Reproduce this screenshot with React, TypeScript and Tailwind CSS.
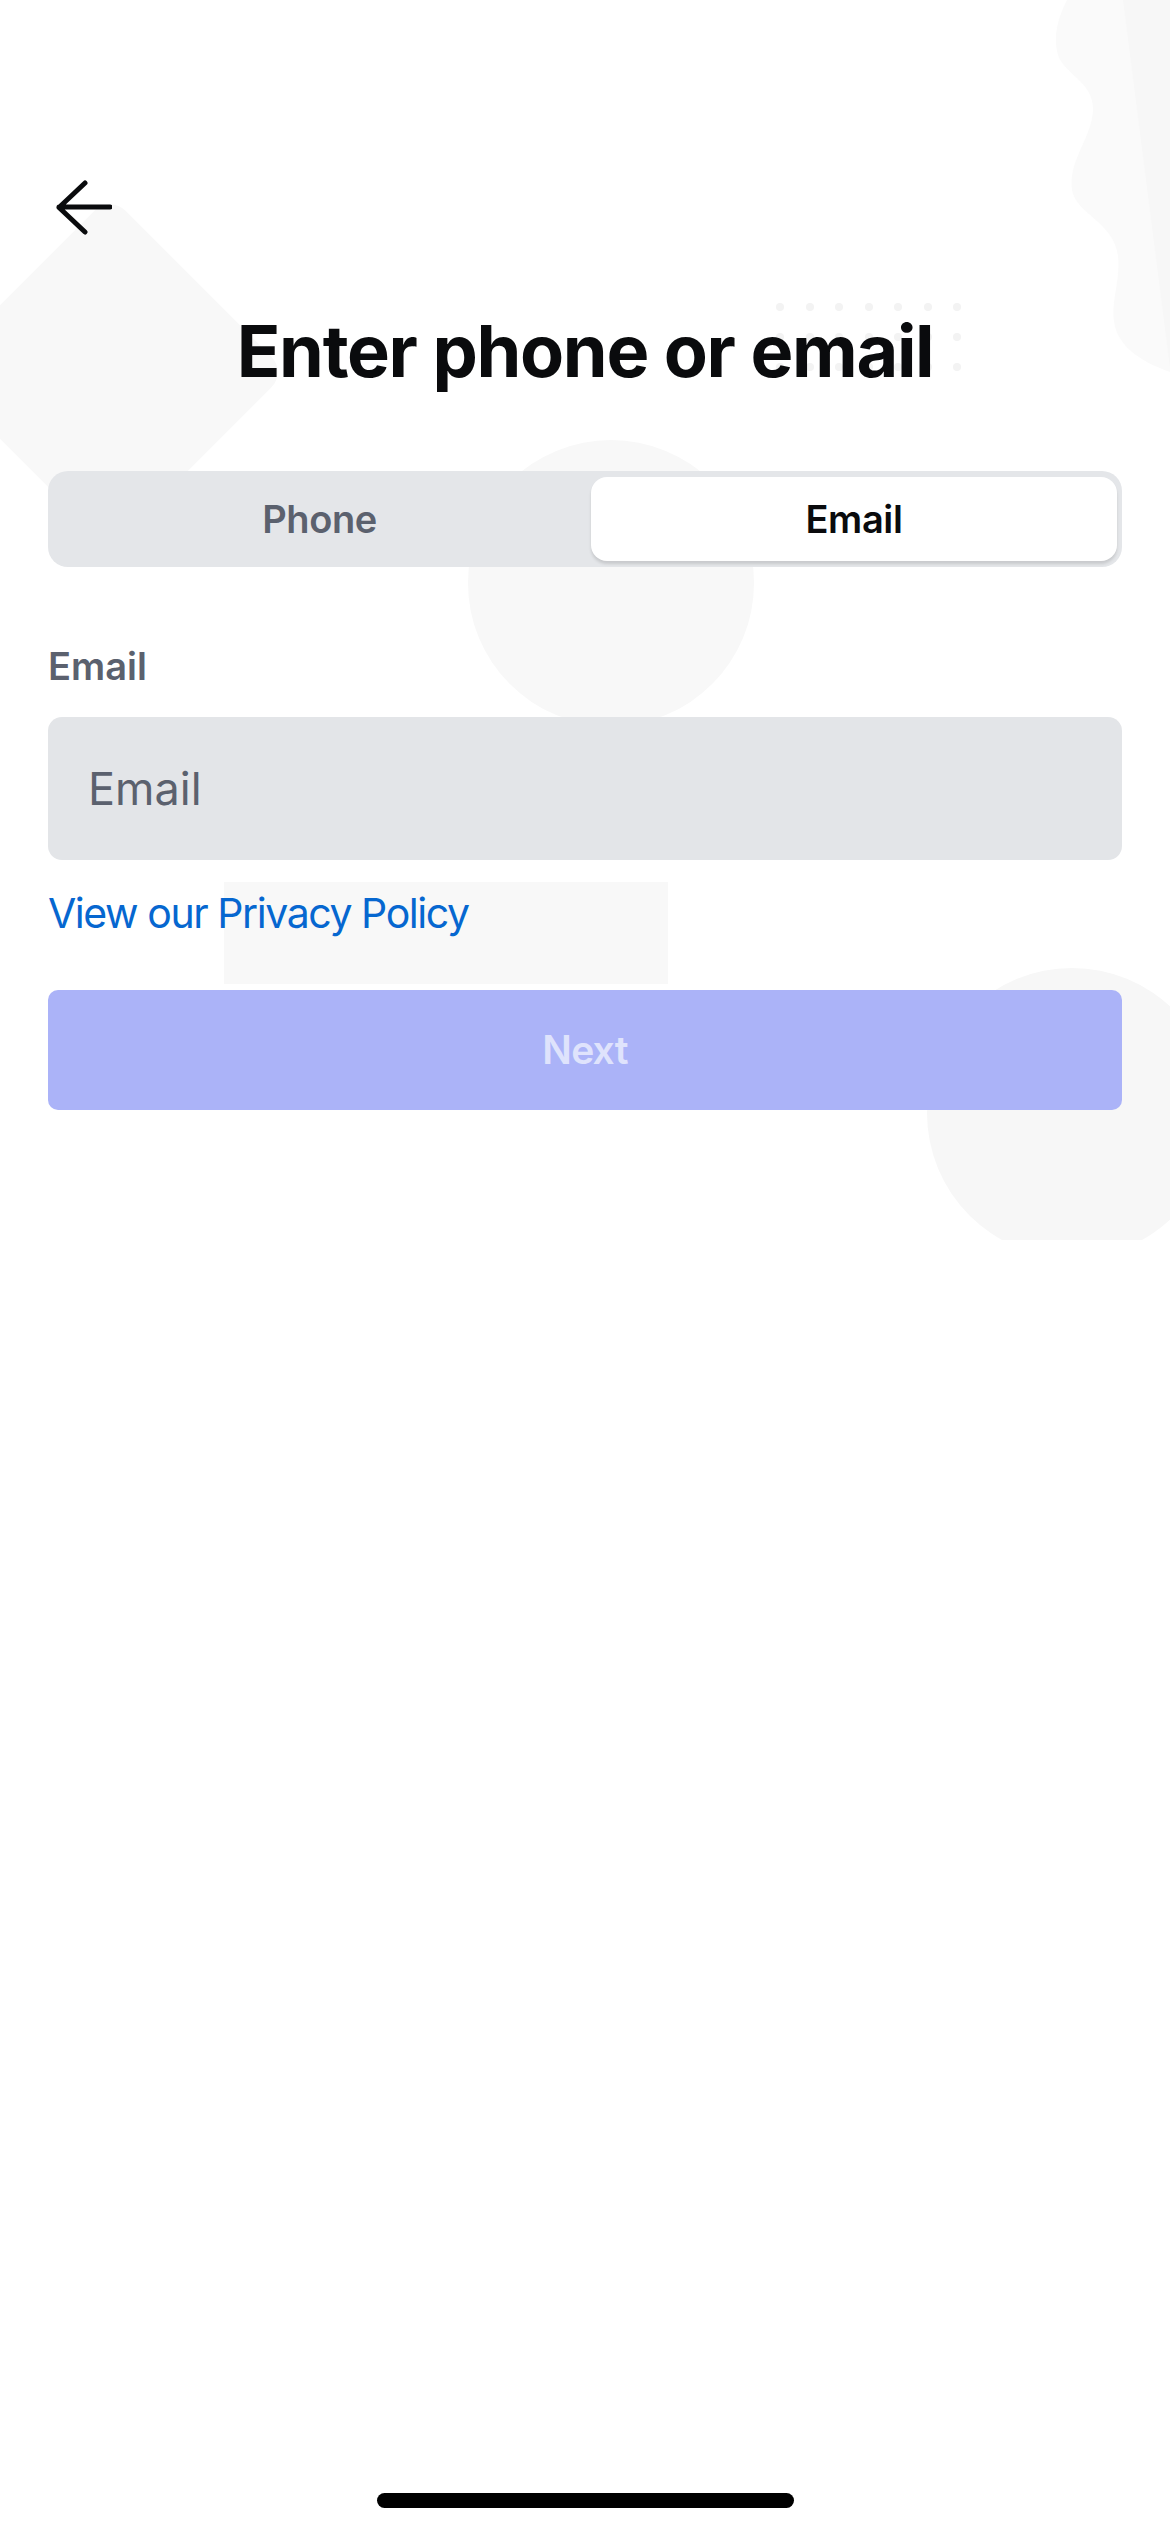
import { useState } from "react";

const DOT_COLS = [0, 1, 2, 3, 4, 5, 6];
const DOT_ROWS = [0, 1, 2];

function BackArrow() {
  return (
    <svg width="56" height="56" viewBox="0 0 56 56" fill="none">
      <path
        d="M54 27H3M29 3L3 27.5L29 52"
        stroke="#0a0b0d"
        strokeWidth="5"
        strokeLinecap="round"
        strokeLinejoin="round"
      />
    </svg>
  );
}

function Decorations() {
  return (
    <div aria-hidden className="pointer-events-none absolute inset-0">
      {/* top right blob */}
      <svg
        className="absolute right-0 top-0"
        width="120"
        height="380"
        viewBox="1050 0 120 380"
      >
        <path
          d="M1067 0C1060 14 1052 34 1058 55C1064 74 1094 82 1093 110C1092 138 1068 160 1072 190C1076 214 1114 222 1118 256C1121 284 1108 306 1116 330C1124 352 1148 364 1170 372V0Z"
          fill="#fafafa"
        />
        <path d="M1123 0H1170V368L1123 0Z" fill="#f7f7f7" />
      </svg>

      {/* left diamond */}
      <div className="absolute left-[-15px] top-[247px] h-[250px] w-[250px] rotate-45 rounded-[22px] bg-[#f8f8f8]" />

      {/* centre circle */}
      <div className="absolute left-[468px] top-[440px] h-[286px] w-[286px] rounded-full bg-[#f8f8f8]" />

      {/* rectangle by the link */}
      <div className="absolute left-[224px] top-[882px] h-[102px] w-[444px] bg-[#f8f8f8]" />

      {/* right circle */}
      <div className="absolute left-[927px] top-[968px] h-[272px] w-[290px] overflow-hidden">
        <div className="h-[290px] w-[290px] rounded-full bg-[#f7f7f7]" />
      </div>

      {/* dot grid */}
      <div className="absolute left-[776px] top-[303px] flex flex-col gap-[22px]">
        {DOT_ROWS.map((r) => (
          <div key={r} className="flex gap-[21.5px]">
            {DOT_COLS.map((c) => (
              <span key={c} className="h-[8px] w-[8px] rounded-full bg-[#f3f3f3]" />
            ))}
          </div>
        ))}
      </div>
    </div>
  );
}

export default function App() {
  const [tab, setTab] = useState<"phone" | "email">("email");
  const [email, setEmail] = useState("");

  return (
    <div className="relative flex h-[2532px] w-[1170px] flex-col overflow-hidden bg-white font-['Inter','Liberation_Sans',sans-serif] text-[#0a0b0d]">
      <Decorations />

      <div className="relative flex flex-col px-[48px] pt-[180px]">
        {/* Back */}
        <button className="ml-[8px] h-[56px] w-[56px]">
          <BackArrow />
        </button>

        {/* Title */}
        <h1 className="mt-[79px] text-center text-[72px] font-bold leading-[72px] tracking-[-0.018em]">
          Enter phone or email
        </h1>

        {/* Tabs */}
        <div className="mt-[84px] flex h-[96px] rounded-[20px] bg-[#e4e6e9] py-[6px] pr-[5px]">
          <button
            onClick={() => setTab("phone")}
            className={
              tab === "phone"
                ? "flex flex-1 items-center justify-center rounded-[16px] bg-white text-[38px] font-semibold tracking-[-0.01em] text-[#0a0b0d] shadow-[0_3px_3px_rgba(0,0,0,0.12)]"
                : "flex flex-1 items-center justify-center text-[38px] font-semibold tracking-[-0.01em] text-[#5b616e]"
            }
          >
            Phone
          </button>
          <button
            onClick={() => setTab("email")}
            className={
              tab === "email"
                ? "flex w-[526px] items-center justify-center rounded-[16px] bg-white text-[38px] font-semibold tracking-[-0.01em] text-[#0a0b0d] shadow-[0_3px_3px_rgba(0,0,0,0.12)]"
                : "flex w-[526px] items-center justify-center text-[38px] font-semibold tracking-[-0.01em] text-[#5b616e]"
            }
          >
            Email
          </button>
        </div>

        {/* Field */}
        <label className="mt-[77px] text-[38px] font-semibold leading-[44px] text-[#5b616e]">
          Email
        </label>
        <input
          value={email}
          onChange={(e) => setEmail(e.target.value)}
          placeholder="Email"
          className="mt-[29px] h-[143px] rounded-[14px] bg-[#e3e5e8] px-[40px] text-[45px] text-[#0a0b0d] placeholder:text-[#5b616e] focus:outline-none"
        />

        <a className="mt-[29px] self-start text-[41px] leading-[48px] tracking-[-0.035em] text-[#0667d0]">
          View our Privacy Policy
        </a>

        <button
          disabled={email.length === 0}
          className="mt-[53px] flex h-[120px] items-center justify-center rounded-[10px] bg-[#abb3f8] text-[39px] font-semibold tracking-[-0.02em] text-[#dfe3fc]"
        >
          Next
        </button>
      </div>

      {/* Home indicator */}
      <div className="relative mx-auto mb-[24px] mt-auto h-[15px] w-[417px] rounded-full bg-black" />
    </div>
  );
}
